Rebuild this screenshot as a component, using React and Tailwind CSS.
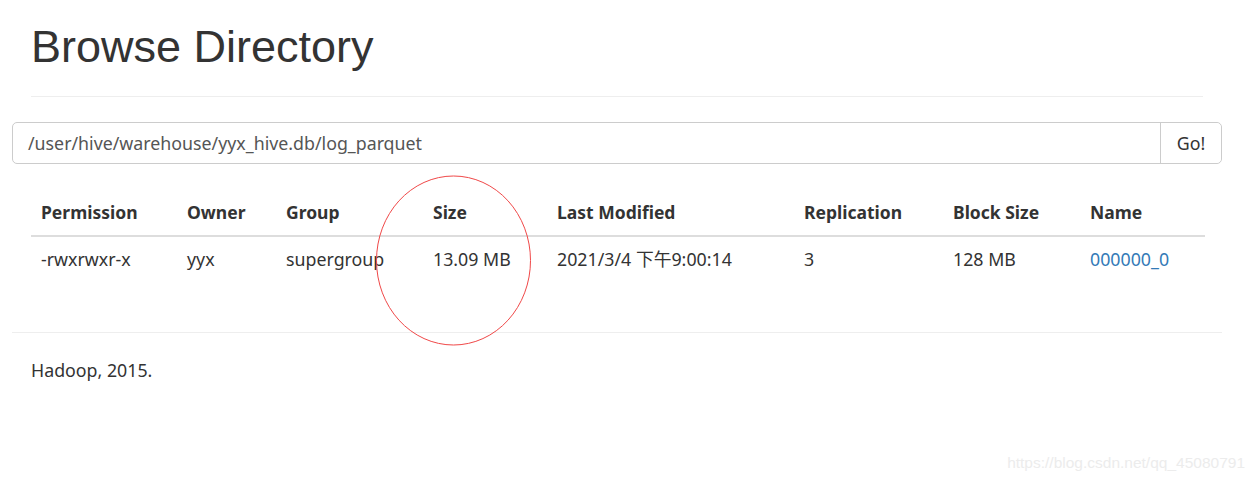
import React from 'react';

const columns = [
  { label: 'Permission', w: 'w-[146px]' },
  { label: 'Owner', w: 'w-[99px]' },
  { label: 'Group', w: 'w-[147px]' },
  { label: 'Size', w: 'w-[124px]' },
  { label: 'Last Modified', w: 'w-[247px]' },
  { label: 'Replication', w: 'w-[149px]' },
  { label: 'Block Size', w: 'w-[137px]' },
  { label: 'Name', w: 'w-[125px]' },
];

const rows = [
  ['-rwxrwxr-x', 'yyx', 'supergroup', '13.09 MB', '2021/3/4 下午9:00:14', '3', '128 MB', '000000_0'],
];

export default function App() {
  return (
    <div className="relative w-[1254px] h-[483px] bg-white text-[#333] overflow-hidden font-['Noto_Sans','Noto_Sans_CJK_SC',sans-serif] text-[17.8px]">
      <div className="w-[1234px] px-[12px]">
        <div className="px-[19px]">
          <h1 className="pt-[22px] pb-[24px] text-[45px] leading-[50px] font-['Liberation_Sans',Arial,sans-serif] text-[#333]">
            Browse Directory
          </h1>
          <div className="border-t border-[#eee]" />
        </div>

        <div className="mt-[25px] flex h-[42px] rounded-[5px] border border-[#ccc]">
          <div className="flex-1 flex items-center px-[15px] text-[#555]">
            /user/hive/warehouse/yyx_hive.db/log_parquet
          </div>
          <button className="w-[61px] border-l border-[#ccc] bg-white text-[#333] rounded-r-[5px]">
            Go!
          </button>
        </div>

        <div className="px-[19px] mt-[26px]">
          <table className="w-[1174px] table-fixed border-collapse">
            <thead>
              <tr className="border-b-2 border-[#ddd]">
                {columns.map((c) => (
                  <th key={c.label} className={`${c.w} text-left font-bold text-[17.5px] px-[10px] py-[10px] leading-[25px]`}>
                    {c.label}
                  </th>
                ))}
              </tr>
            </thead>
            <tbody>
              {rows.map((r, i) => (
                <tr key={i}>
                  {r.map((cell, j) => (
                    <td key={j} className="px-[10px] py-[10px] leading-[25px] whitespace-nowrap">
                      {j === 7 ? <a className="text-[#337ab7]">{cell}</a> : cell}
                    </td>
                  ))}
                </tr>
              ))}
            </tbody>
          </table>
        </div>

        <div className="mt-[50px] border-t border-[#eee]" />
        <div className="px-[19px] pt-[25px] leading-[25px]">Hadoop, 2015.</div>
      </div>

      <svg className="absolute left-0 top-0 pointer-events-none" width="1254" height="483">
        <ellipse cx="453.5" cy="260.5" rx="77" ry="84.5" fill="none" stroke="#f04848" strokeWidth="1" />
      </svg>

      <div className="absolute right-[9px] bottom-[9px] text-[15.5px] text-[#ececec] font-['Liberation_Sans',Arial,sans-serif]">
        https://blog.csdn.net/qq_45080791
      </div>
    </div>
  );
}
